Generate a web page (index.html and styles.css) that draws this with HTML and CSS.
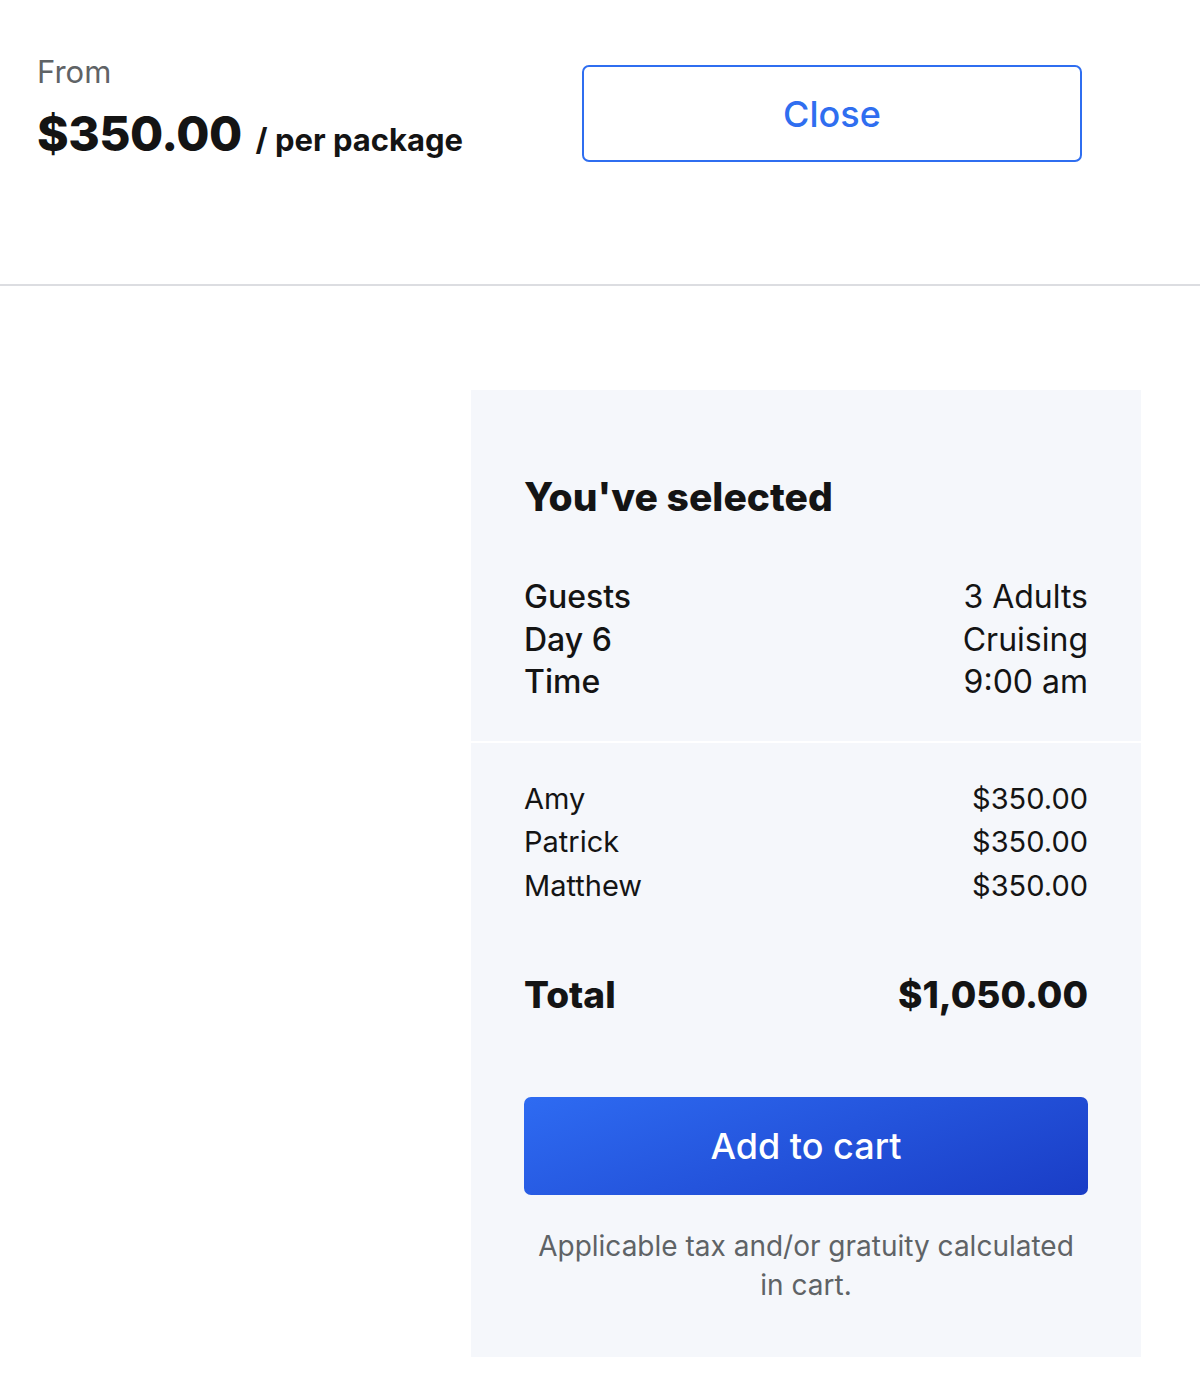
FILE: index.html
```html
<!DOCTYPE html>
<html lang="en">
<head>
<meta charset="utf-8">
<title>Booking summary</title>
<link rel="stylesheet" href="styles.css">
</head>
<body>
<header class="header">
  <div class="price-block">
    <div class="from">From</div>
    <div class="price"><span class="amount">$350.00</span><span class="unit">/ per package</span></div>
  </div>
  <button class="close-btn" type="button">Close</button>
</header>
<main class="main">
  <section class="summary">
    <div class="summary-top">
      <h2 class="summary-title">You've selected</h2>
      <div class="rows details">
        <div class="row"><span class="label">Guests</span><span class="value">3 Adults</span></div>
        <div class="row"><span class="label">Day 6</span><span class="value">Cruising</span></div>
        <div class="row"><span class="label">Time</span><span class="value">9:00 am</span></div>
      </div>
    </div>
    <div class="summary-bottom">
      <div class="rows people">
        <div class="row"><span>Amy</span><span>$350.00</span></div>
        <div class="row"><span>Patrick</span><span>$350.00</span></div>
        <div class="row"><span>Matthew</span><span>$350.00</span></div>
      </div>
      <div class="total"><span>Total</span><span>$1,050.00</span></div>
      <button class="cart-btn" type="button">Add to cart</button>
      <p class="note">Applicable tax and/or gratuity calculated in cart.</p>
    </div>
  </section>
</main>
</body>
</html>
```

FILE: styles.css
```css
* { box-sizing: border-box; }
body {
  margin: 0;
  background: #fff;
  font-family: "Inter", "Liberation Sans", sans-serif;
  color: #141414;
}
.header {
  display: flex;
  align-items: flex-start;
  height: 286px;
  padding: 52px 0 0 37px;
  border-bottom: 2px solid #dcdde1;
}
.price-block { width: 545px; }
.from {
  font-size: 31px;
  line-height: 40px;
  color: #5f6366;
}
.price {
  display: flex;
  align-items: baseline;
  margin-top: 12px;
}
.amount {
  font-size: 48px;
  font-weight: 800;
  line-height: 60px;
  letter-spacing: -0.5px;
}
.unit {
  font-size: 31px;
  font-weight: 700;
  margin-left: 14px;
}
.close-btn {
  margin-top: 13px;
  width: 500px;
  height: 97px;
  border: 2px solid #2f6ef0;
  border-radius: 7px;
  background: #fff;
  color: #2f6ef0;
  font-family: inherit;
  font-size: 36px;
  font-weight: 500;
}
.main { padding: 104px 0 24px 471px; }
.summary {
  width: 670px;
  background: #f5f7fb;
}
.summary-top {
  padding: 82px 53px 37px;
  border-bottom: 2px solid #fff;
}
.summary-title {
  margin: 0 0 54px;
  font-size: 39px;
  font-weight: 800;
  line-height: 50px;
}
.rows { display: flex; flex-direction: column; }
.row {
  display: flex;
  justify-content: space-between;
  font-size: 32px;
  line-height: 42.5px;
}
.details .label { font-weight: 500; }
.summary-bottom { padding: 34px 53px 52px; }
.people .row { font-size: 29px; line-height: 43.5px; }
.total {
  display: flex;
  justify-content: space-between;
  margin-top: 63px;
  font-size: 37px;
  font-weight: 800;
  line-height: 50px;
}
.cart-btn {
  display: block;
  width: 100%;
  height: 98px;
  margin-top: 77px;
  border: 0;
  border-radius: 7px;
  background: linear-gradient(160deg, #2e6bf2 0%, #1a3dc6 100%);
  color: #fff;
  font-family: inherit;
  font-size: 36px;
  font-weight: 500;
}
.note {
  margin: 32px 0 0;
  text-align: center;
  font-size: 28px;
  line-height: 39px;
  color: #5f6366;
  padding: 0 14px;
}
```
